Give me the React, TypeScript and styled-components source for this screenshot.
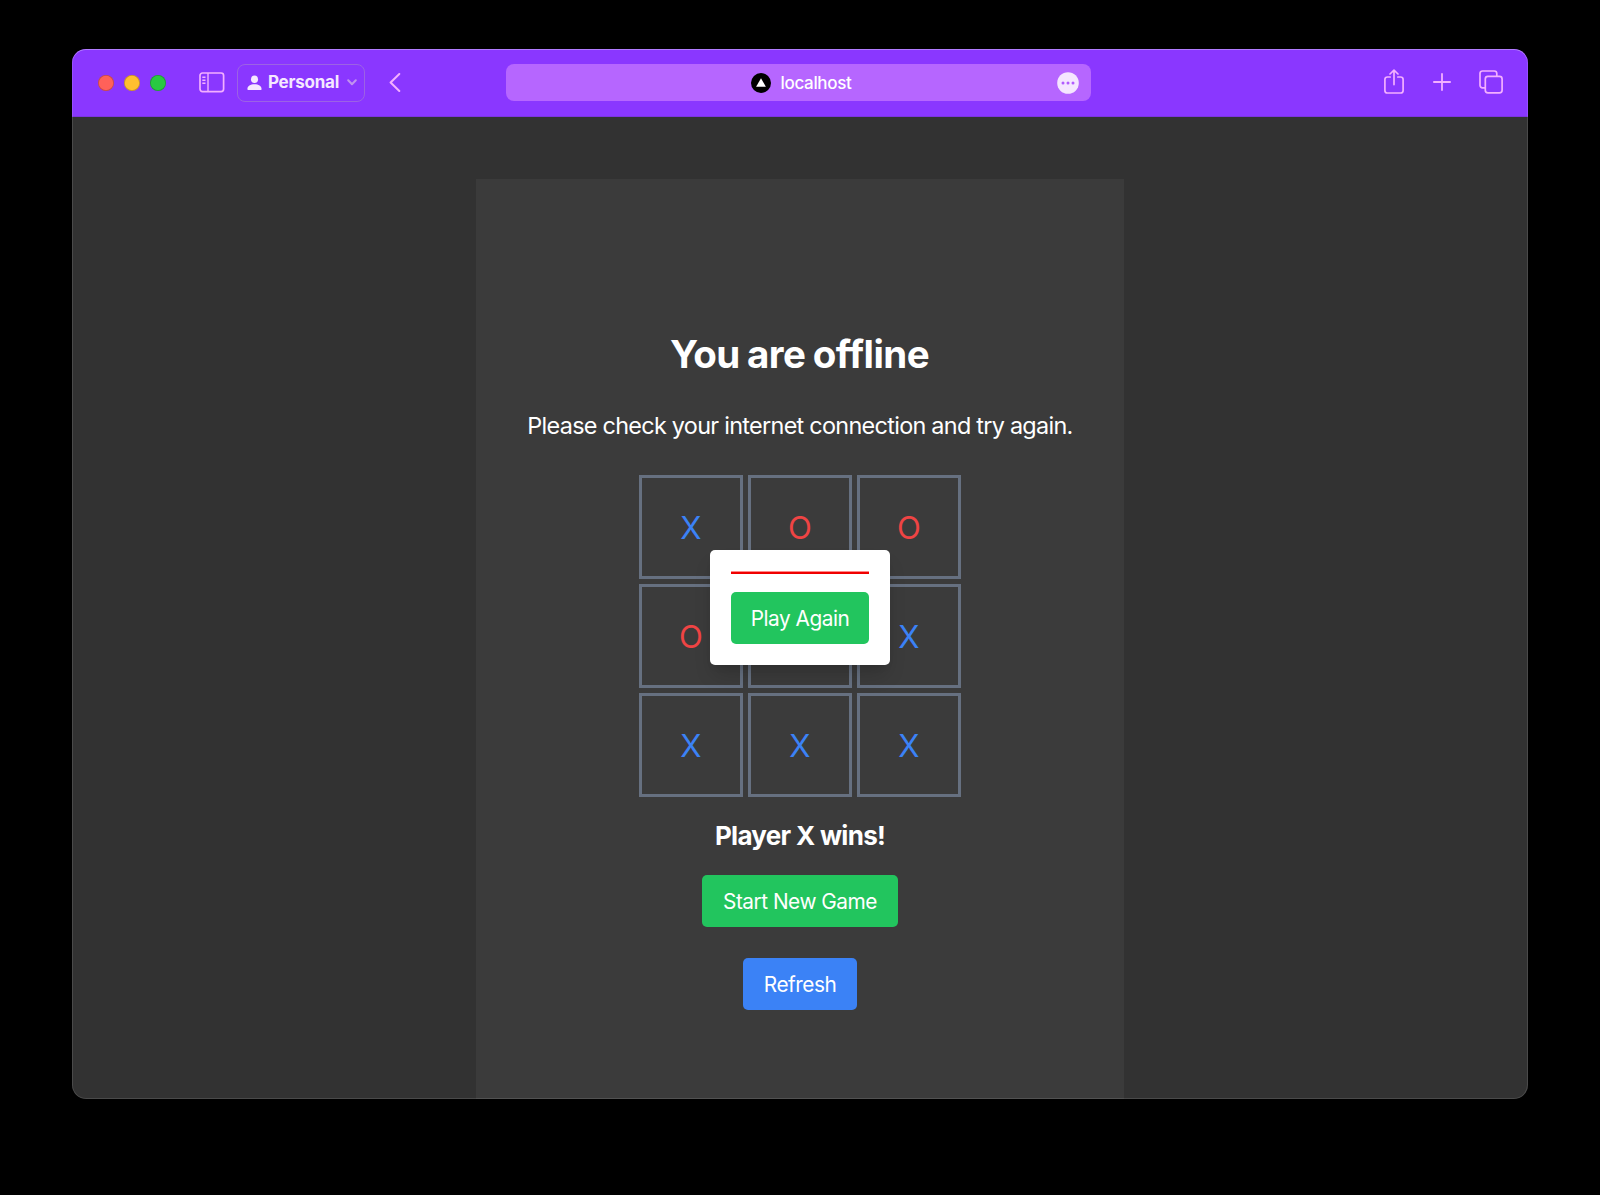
import React from "react";
import styled, { createGlobalStyle } from "styled-components";

const GlobalStyle = createGlobalStyle`
  * { box-sizing: border-box; }
  body {
    margin: 0;
    background: #000;
    color: #fff;
    font-family: Inter, "Liberation Sans", sans-serif;
  }
  button { font-family: inherit; }
`;

const Desktop = styled.div`
  height: 1195px;
  padding: 49px 72px 96px;
  overflow: hidden;
`;

const Window = styled.div`
  position: relative;
  height: 1050px;
  display: flex;
  flex-direction: column;
  border-radius: 14px;
  overflow: hidden;
  background: #323232;
  &::after {
    content: "";
    position: absolute;
    inset: 0;
    border-radius: 14px;
    box-shadow: inset 0 1px 0 rgba(255, 255, 255, 0.26), inset 0 0 0 1px rgba(255, 255, 255, 0.12);
    pointer-events: none;
  }
`;

const Toolbar = styled.header`
  flex: none;
  height: 68px;
  display: grid;
  grid-template-columns: 434px 585px 1fr;
  align-items: center;
  background: #8a37ff;
  border-bottom: 1px solid #7c34e0;
  color: #f3b0ff;
  svg { display: block; flex: none; }
`;

const ToolbarStart = styled.div`
  display: flex;
  align-items: center;
  padding-left: 26.2px;
`;

const TrafficLights = styled.div`
  display: flex;
  gap: 10px;
  margin-right: 32.8px;
`;

const Light = styled.span<{ $color: string }>`
  width: 16px;
  height: 16px;
  border-radius: 50%;
  background: ${(p) => p.$color};
  box-shadow: inset 0 0 0 0.8px rgba(0, 0, 0, 0.22);
`;

const Profile = styled.button`
  width: 128px;
  height: 38px;
  margin: 0 24.5px 0 12px;
  padding: 0 7px 0 9px;
  display: flex;
  align-items: center;
  border: 1px solid #9c62e4;
  border-radius: 8px;
  background: transparent;
  color: #f5e8ff;
  font-size: 17px;
  font-weight: 700;
  letter-spacing: -0.24px;
  span { margin: -1px auto 0 6px; }
`;

const AddressBar = styled.div`
  height: 37px;
  padding: 0 12px 0 13px;
  display: grid;
  grid-template-columns: 22px 1fr 22px;
  align-items: center;
  border-radius: 8px;
  background: #b666ff;
  color: #fff;
  font-size: 17px;
  font-weight: 500;
  letter-spacing: -0.32px;
`;

const Site = styled.div`
  grid-column: 2;
  display: flex;
  align-items: center;
  justify-content: center;
  gap: 9px;
  padding-left: 5px;
  span { margin-top: 1px; }
`;

const ToolbarEnd = styled.div`
  display: flex;
  align-items: center;
  justify-content: flex-end;
  gap: 28.5px;
  padding: 0 25px 2px 0;
`;

const Page = styled.main`
  position: relative;
  flex: 1;
  display: flex;
  justify-content: center;
  overflow: hidden;
`;

const Card = styled.section`
  width: 648px;
  height: 1000px;
  margin-top: 62px;
  padding-top: 152px;
  display: flex;
  flex-direction: column;
  align-items: center;
  background: #3b3b3b;
`;

const Title = styled.h1`
  margin: 0 1px 30px 0;
  font-size: 38.5px;
  line-height: 46.8px;
  font-weight: 700;
  letter-spacing: -0.58px;
  word-spacing: -1.2px;
  font-variant-ligatures: none;
  white-space: nowrap;
`;

const Message = styled.p`
  margin: 0 0 30.8px;
  font-size: 23.4px;
  line-height: 36.4px;
  letter-spacing: -0.68px;
  word-spacing: -0.2px;
  white-space: nowrap;
`;

const Board = styled.div`
  display: grid;
  grid-template-columns: repeat(3, 104px);
  grid-auto-rows: 104px;
  gap: 5px;
`;

const Cell = styled.div<{ $mark: string }>`
  display: flex;
  align-items: center;
  justify-content: center;
  padding-top: 4px;
  border: 3px solid #667080;
  color: ${(p) => (p.$mark === "X" ? "#3b82f6" : "#ef4444")};
  font-size: 31.2px;
  line-height: 1;
`;

const Result = styled.p`
  margin: 21px 0 20.3px;
  font-size: 26px;
  line-height: 36.4px;
  font-weight: 700;
  letter-spacing: -0.7px;
`;

const ActionButton = styled.button<{ $color: string; $width: number }>`
  width: ${(p) => p.$width}px;
  height: 52px;
  padding: 2px 0 0;
  border: 0;
  border-radius: 5px;
  background: ${(p) => p.$color};
  color: #fff;
  font-size: 20.8px;
  line-height: 31.2px;
  letter-spacing: -0.48px;
  white-space: nowrap;
`;

const Actions = styled.div`
  display: flex;
  flex-direction: column;
  align-items: center;
  gap: 31px;
`;

const Overlay = styled.div`
  position: absolute;
  inset: 0;
  display: flex;
  align-items: center;
  justify-content: center;
  padding-bottom: 2px;
`;

const Dialog = styled.div`
  width: 180px;
  height: 115px;
  padding: 21px;
  display: flex;
  flex-direction: column;
  align-items: center;
  gap: 18px;
  border-radius: 5px;
  background: #fff;
  box-shadow: 0 13px 20px -4px rgba(0, 0, 0, 0.16), 0 5px 8px -5px rgba(0, 0, 0, 0.16);
`;

const WinLine = styled.div`
  width: 138px;
  height: 3px;
  flex: none;
  background: linear-gradient(#f88 0 1px, #f00000 1px);
`;

const GREEN = "#22c55e";
const BLUE = "#3b82f6";
const marks = ["X", "O", "O", "O", "", "X", "X", "X", "X"];

const SidebarIcon = () => (
  <svg width="26" height="21" viewBox="0 0 26 21" fill="none" stroke="currentColor" strokeWidth="1.7">
    <rect x="1" y="1" width="23.6" height="18.6" rx="2.5" />
    <path d="M9 1v18.6M3.3 5.2h3.2M3.3 8.2h3.2M3.3 11.2h3.2" strokeWidth="1.4" />
  </svg>
);

const PersonIcon = () => (
  <svg width="15" height="16" viewBox="0 0 15 16" fill="currentColor">
    <ellipse cx="7.5" cy="4.2" rx="3.5" ry="3.8" />
    <path d="M.4 14.2c0-3 3-4.9 7.1-4.9s7.1 1.9 7.1 4.9c0 .5-.3.7-.8.7H1.2c-.5 0-.8-.2-.8-.7Z" />
  </svg>
);

const ChevronIcon = () => (
  <svg width="10" height="7" viewBox="0 0 10 7" fill="none" stroke="#c093ef" strokeWidth="2" strokeLinecap="round" strokeLinejoin="round">
    <path d="M1.2 1.2 5 5.2l3.8-4" />
  </svg>
);

const BackIcon = () => (
  <svg width="12" height="20" viewBox="0 0 12 20" fill="none" stroke="currentColor" strokeWidth="2" strokeLinecap="round" strokeLinejoin="round">
    <path d="M10.3 1 1.6 9.5l8.7 8.500" />
  </svg>
);

const SiteIcon = () => (
  <svg width="20" height="20" viewBox="0 0 20 20">
    <circle cx="10" cy="10" r="10" fill="#000" />
    <path d="M10 5.2 14.9 13.7H5.1Z" fill="#fff" />
  </svg>
);

const MoreIcon = () => (
  <svg width="22" height="22" viewBox="0 0 22 22" fill="#b15cff">
    <circle cx="11" cy="11" r="10.8" fill="#f5e6ff" />
    <circle cx="6" cy="11" r="1.5" />
    <circle cx="11" cy="11" r="1.5" />
    <circle cx="16" cy="11" r="1.5" />
  </svg>
);

const ShareIcon = () => (
  <svg width="20" height="26" viewBox="0 0 20 26" fill="none" stroke="currentColor" strokeWidth="1.7" strokeLinecap="round" strokeLinejoin="round">
    <path d="M6.2 8H3.4C1.9 8 .9 9 .9 10.5v11c0 1.5 1 2.5 2.5 2.5h13.2c1.5 0 2.5-1 2.5-2.5v-11c0-1.5-1-2.5-2.5-2.5h-2.8" />
    <path d="M10 15.6V1.3M6 5l4-3.9L14 5" />
  </svg>
);

const PlusIcon = () => (
  <svg width="18" height="18" viewBox="0 0 18 18" fill="none" stroke="currentColor" strokeWidth="1.8" strokeLinecap="round">
    <path d="M9 .9v16.2M.9 9h16.2" />
  </svg>
);

const TabsIcon = () => (
  <svg width="24" height="24" viewBox="0 0 24 24" fill="none" stroke="currentColor" strokeWidth="1.7">
    <rect x="6.3" y="6.3" width="16.8" height="16.5" rx="2.6" />
    <path d="M6.3 17.8H3.5C2 17.8 1 16.8 1 15.3V3.5C1 2 2 1 3.5 1h11.8c1.5 0 2.5 1 2.5 2.5v2.8" />
  </svg>
);

export default function App() {
  return (
    <Desktop>
      <GlobalStyle />
      <Window>
        <Toolbar>
          <ToolbarStart>
            <TrafficLights>
              <Light $color="#ff6159" />
              <Light $color="#ffbf2f" />
              <Light $color="#29c941" />
            </TrafficLights>
            <SidebarIcon />
            <Profile>
              <PersonIcon />
              <span>Personal</span>
              <ChevronIcon />
            </Profile>
            <BackIcon />
          </ToolbarStart>
          <AddressBar>
            <Site>
              <SiteIcon />
              <span>localhost</span>
            </Site>
            <MoreIcon />
          </AddressBar>
          <ToolbarEnd>
            <ShareIcon />
            <PlusIcon />
            <TabsIcon />
          </ToolbarEnd>
        </Toolbar>
        <Page>
          <Card>
            <Title>You are offline</Title>
            <Message>Please check your internet connection and try again.</Message>
            <Board>
              {marks.map((mark, i) => (
                <Cell key={i} $mark={mark}>{mark}</Cell>
              ))}
            </Board>
            <Result>Player X wins!</Result>
            <Actions>
              <ActionButton $color={GREEN} $width={196}>Start New Game</ActionButton>
              <ActionButton $color={BLUE} $width={114}>Refresh</ActionButton>
            </Actions>
          </Card>
          <Overlay>
            <Dialog>
              <WinLine />
              <ActionButton $color={GREEN} $width={138}>Play Again</ActionButton>
            </Dialog>
          </Overlay>
        </Page>
      </Window>
    </Desktop>
  );
}
